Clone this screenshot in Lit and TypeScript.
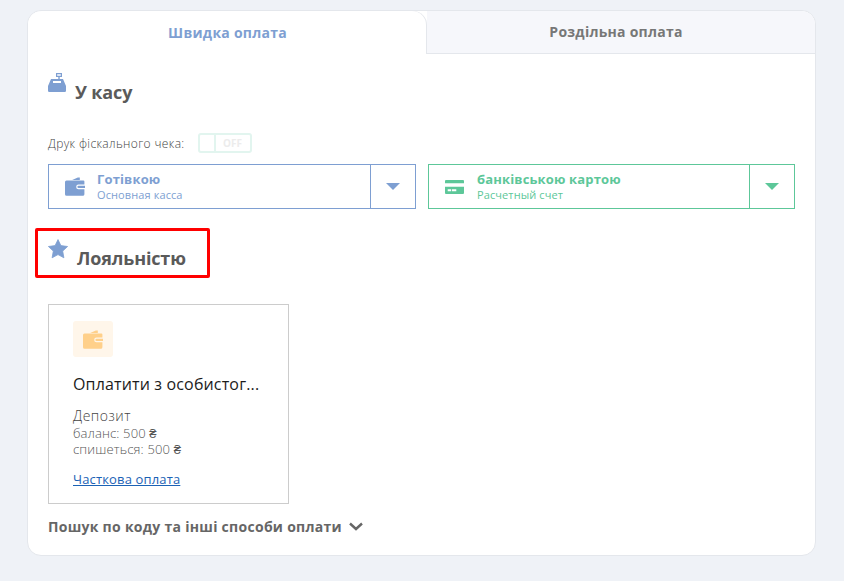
import { LitElement, html, css } from "lit";
import { customElement } from "lit/decorators.js";

const wallet = (cls: string) => html`<svg class=${cls} viewBox="0 0 20 19"><path d="M12.8 0.4 L14.8 0.4 L14.8 3 L7.2 3 Z" /><path fill-rule="evenodd" d="M1.5 3.6 H18.4 Q19.4 3.6 19.4 4.6 V7.6 H13.5 Q11.2 7.6 11.2 9.9 Q11.2 12.2 13.5 12.2 H19.4 V17.2 Q19.4 18.8 17.8 18.8 H1.6 Q0 18.8 0 17.2 V5.1 Q0 3.6 1.5 3.6 Z" /><path d="M13.6 8.8 H20 V11 H13.6 Q12.4 11 12.4 9.9 Q12.4 8.8 13.6 8.8 Z" /></svg>`;

@customElement("app-root")
export class AppRoot extends LitElement {
  static styles = css`
    :host {
      display: block;
      min-height: 581px;
      background: #eff2f7;
      font-family: "Open Sans", sans-serif;
      padding: 10px 28px 25px 27px;
      box-sizing: border-box;
      color: #5c5c5c;
    }
    .card {
      height: 546px;
      box-sizing: border-box;
      background: #fff;
      border: 1px solid #e4e7ec;
      border-radius: 14px;
      display: flex;
      flex-direction: column;
    }
    .tabs { display: flex; height: 43px; flex: none; }
    .tab {
      font-size: 14px;
      font-weight: 700;
      letter-spacing: 0.25px;
      display: flex;
      align-items: center;
      justify-content: center;
      padding-bottom: 1px;
      box-sizing: border-box;
    }
    .tab.active {
      width: 398px;
      color: #7e9fd2;
      background: #fff;
      border-radius: 14px 14px 0 0;
      position: relative;
      box-shadow: 1px 0 0 #e4e7ec;
      padding-left: 1px;
    }
    .tab.other {
      flex: 1;
      margin-left: 1px;
      color: #777;
      background: #f6f7fb;
      border-bottom: 1px solid #e4e7ec;
      border-radius: 0 14px 0 0;
      padding: 0 10px 2px 0;
    }
    .body { flex: 1; display: flex; flex-direction: column; padding: 0 20px; }
    .head { display: flex; align-items: flex-start; color: #5a5a5a; font-weight: 700; font-size: 18px; line-height: 24px; letter-spacing: -0.15px; }
    .head.kasa { margin-top: 19px; height: 35px; }
    .head.kasa svg { width: 18px; height: 19px; fill: #7e9fd2; margin-right: 9px; flex: none; }
    .head.kasa span { margin-top: 7px; }
    .fiscal { display: flex; align-items: center; margin-top: 25px; height: 20px; }
    .fiscal label { font-size: 12px; font-weight: 300; letter-spacing: 0.36px; color: #444; width: 150px; white-space: nowrap; }
    .toggle {
      width: 54px;
      height: 20px;
      box-sizing: border-box;
      border: 2px solid #e2f5ef;
      border-radius: 3px;
      display: flex;
      font-size: 10px;
      font-weight: 700;
      color: #ececec;
    }
    .toggle i { width: 14px; border-right: 2px solid #e2f5ef; flex: none; }
    .toggle b { flex: 1; text-align: center; line-height: 16px; font-weight: 700; padding-right: 1px; }
    .selects { display: flex; gap: 12px; margin-top: 11px; }
    .sel {
      flex: 1;
      height: 45px;
      box-sizing: border-box;
      border: 1px solid var(--c);
      display: flex;
      color: var(--c);
    }
    .sel .main { flex: 1; display: flex; align-items: center; padding-left: 16px; min-width: 0; }
    .sel .ic { width: 20px; height: 19px; fill: var(--c); flex: none; margin-right: 12px; }
    .sel .t { font-size: 13px; font-weight: 700; line-height: 16px; letter-spacing: 0.15px; margin-top: -1px; }
    .sel .s { font-size: 11px; line-height: 15px; letter-spacing: 0.1px; }
    .sel .arrow {
      width: 45px;
      box-sizing: border-box;
      border-left: 1px solid var(--c);
      display: flex;
      align-items: center;
      justify-content: center;
    }
    .sel .tri { width: 0; height: 0; border-left: 7px solid transparent; border-right: 7px solid transparent; border-top: 7px solid var(--c); }
    .blue { --c: #7e9fd2; }
    .green { --c: #5dc799; }
    .sel.green { flex: 0 0 367px; }
    .head.loyal { position: relative; margin-top: 27px; height: 50px; }
    .head.loyal svg { width: 20px; height: 20px; fill: #7e9fd2; margin: 3px 9px 0 0; flex: none; }
    .head.loyal span { margin-top: 10px; }
    .redbox {
      position: absolute;
      left: -13px;
      top: -8px;
      width: 175px;
      height: 50px;
      box-sizing: border-box;
      border: 3px solid #f00;
      border-radius: 2px;
    }
    .pay {
      width: 241px;
      height: 200px;
      box-sizing: border-box;
      border: 1px solid #ccc;
      margin-top: 18px;
      padding: 16px 24px 0;
      flex: none;
    }
    .pay .thumb {
      width: 40px;
      height: 36px;
      border-radius: 3px;
      background: #fff6ea;
      display: flex;
      align-items: center;
      justify-content: center;
    }
    .pay .thumb svg { width: 20px; height: 19px; fill: #ffd08a; }
    .pay .name { font-size: 16px; line-height: 22px; color: #1c1c1c; margin-top: 16px; white-space: nowrap; letter-spacing: 0.15px; }
    .pay .dep { font-size: 14px; font-weight: 300; line-height: 18px; color: #444; margin-top: 12px; letter-spacing: 0.5px; }
    .pay .ln { font-size: 13px; font-weight: 300; line-height: 16px; color: #555; letter-spacing: 0.15px; }
    .pay a { display: block; margin-top: 13px; font-size: 13px; line-height: 18px; color: #1b62b5; text-decoration: underline; letter-spacing: 0.15px; }
    .more {
      display: flex;
      align-items: center;
      margin-top: 13px;
      font-size: 14px;
      font-weight: 700;
      letter-spacing: 0.28px;
      color: #666;
      line-height: 20px;
    }
    .more svg { width: 14px; height: 10px; margin-left: 7px; stroke: #666; fill: none; stroke-width: 2.4; }
  `;

  render() {
    return html`
      <div class="card">
        <div class="tabs">
          <div class="tab active">Швидка оплата</div>
          <div class="tab other">Роздільна оплата</div>
        </div>
        <div class="body">
          <div class="head kasa">
            <svg viewBox="0 0 18 19">
              <path fill-rule="evenodd" d="M8 0 H14 V4 H11.7 V6 H15 L18 13 V17.8 Q18 19 16.8 19 H1.2 Q0 19 0 17.8 V13 L3 6 H10.3 V4 H8 Z M9.2 1.2 V2.8 H12.8 V1.2 Z M5 8 V10 H13 V8 Z" />
            </svg>
            <span>У касу</span>
          </div>
          <div class="fiscal">
            <label>Друк фіскального чека:</label>
            <div class="toggle"><i></i><b>OFF</b></div>
          </div>
          <div class="selects">
            <div class="sel blue">
              <div class="main">
                ${wallet("ic")}
                <div><div class="t">Готівкою</div><div class="s">Основная касса</div></div>
              </div>
              <div class="arrow"><div class="tri"></div></div>
            </div>
            <div class="sel green">
              <div class="main">
                <svg class="ic" viewBox="0 0 20 19">
                  <path d="M1 3 H18 Q19 3 19 4 V6.3 H0 V4 Q0 3 1 3 Z" />
                  <path fill-rule="evenodd" d="M0 9.7 H19 V16 Q19 17 18 17 H1 Q0 17 0 16 Z M2.7 12.3 V14.3 H6 V12.3 Z M6.8 12.3 V14.3 H11.3 V12.3 Z" />
                </svg>
                <div><div class="t">банківською картою</div><div class="s">Расчетный счет</div></div>
              </div>
              <div class="arrow"><div class="tri"></div></div>
            </div>
          </div>
          <div class="head loyal">
            <svg viewBox="0 0 20 20"><path d="M10 0.6 L12.9 6.6 L19.6 7.5 L14.7 12.1 L15.9 18.8 L10 15.6 L4.1 18.8 L5.3 12.1 L0.4 7.5 L7.1 6.6 Z" stroke="#7e9fd2" stroke-width="0.8" stroke-linejoin="round" /></svg>
            <span>Лояльністю</span>
            <div class="redbox"></div>
          </div>
          <div class="pay">
            <div class="thumb">${wallet("")}</div>
            <div class="name">Оплатити з особистог...</div>
            <div class="dep">Депозит</div>
            <div class="ln">баланс: 500 ₴</div>
            <div class="ln">спишеться: 500 ₴</div>
            <a href="#">Часткова оплата</a>
          </div>
          <div class="more">
            <span>Пошук по коду та інші способи оплати</span>
            <svg viewBox="0 0 14 10"><path d="M1 1.5 L7 7 L13 1.5" /></svg>
          </div>
        </div>
      </div>
    `;
  }
}
